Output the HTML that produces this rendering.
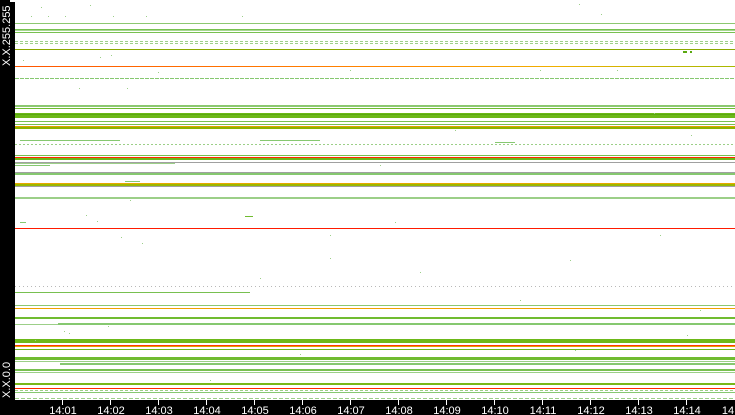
<!DOCTYPE html>
<html><head><style>
html,body{margin:0;padding:0;background:#fff;width:735px;height:415px;overflow:hidden}
svg{display:block}
text{font-family:"Liberation Sans",sans-serif;fill:#fff;font-size:11px}
</style></head><body>
<svg width="735" height="415" viewBox="0 0 735 415" xmlns="http://www.w3.org/2000/svg">
<defs>
<linearGradient id="og" x1="0" x2="1"><stop offset="0" stop-color="#ff5500"/><stop offset="0.55" stop-color="#ff8a00"/><stop offset="0.75" stop-color="#f0b000"/><stop offset="1" stop-color="#a8b800"/></linearGradient>
<linearGradient id="yg" x1="0" x2="1"><stop offset="0" stop-color="#e0a000"/><stop offset="1" stop-color="#c8a800"/></linearGradient>
</defs>
<rect x="0" y="0" width="735" height="415" fill="#fff"/>
<g shape-rendering="crispEdges">
<!-- top region -->
<rect x="15" y="23" width="720" height="1" fill="#8cc870"/>
<rect x="15" y="29" width="720" height="1" fill="#78c050" stroke-dasharray="3 2"/>
<rect x="15" y="30" width="720" height="1" fill="#a6d890"/>
<rect x="15" y="32" width="720" height="1" fill="#78c050"/>
<line x1="15" y1="41.5" x2="735" y2="41.5" stroke="#9ccf88" stroke-dasharray="3 2"/>
<line x1="15" y1="43.5" x2="735" y2="43.5" stroke="#9ccf88" stroke-dasharray="3 2"/>
<rect x="15" y="49" width="720" height="1" fill="#8ca800"/>
<rect x="15" y="66" width="720" height="1" fill="url(#og)"/>
<line x1="15" y1="78.5" x2="735" y2="78.5" stroke="#86c870" stroke-dasharray="4 1"/>
<rect x="15" y="105" width="720" height="2" fill="#8cc870"/>
<rect x="15" y="108" width="720" height="1" fill="#70bc30"/>
<rect x="15" y="113" width="720" height="5" fill="#6cb818"/>
<rect x="15" y="114" width="720" height="1" fill="#5aa810"/>
<rect x="15" y="121" width="720" height="1" fill="#78c050"/>
<rect x="15" y="124" width="720" height="1" fill="#78c050"/>
<rect x="15" y="126" width="720" height="3" fill="#8cb400"/>
<rect x="15" y="126" width="720" height="1" fill="#e0a000"/>
<!-- middle -->
<rect x="20" y="140" width="100" height="1" fill="#86c870"/>
<rect x="260" y="140" width="60" height="1" fill="#86c870"/>
<rect x="495" y="142" width="20" height="1" fill="#86c870"/>
<line x1="15" y1="144.5" x2="735" y2="144.5" stroke="#9ccf88" stroke-dasharray="2 2"/>
<rect x="15" y="155" width="720" height="1" fill="#78c050"/>
<rect x="15" y="157" width="720" height="1" fill="#ff2a00"/>
<rect x="15" y="158" width="720" height="2" fill="#6cb818"/>
<rect x="15" y="162" width="720" height="1" fill="#a0a0a0"/>
<rect x="15" y="163" width="160" height="1" fill="#9ccf88"/>
<rect x="15" y="165" width="35" height="1" fill="#86c870"/>
<rect x="15" y="172" width="720" height="1" fill="#a0a0a0"/>
<rect x="15" y="173" width="720" height="2" fill="#86c870"/>
<rect x="125" y="181" width="15" height="1" fill="#86c870"/>
<rect x="15" y="183" width="720" height="3" fill="#9cb800"/>
<rect x="15" y="183" width="720" height="1" fill="#e8a800"/>
<rect x="15" y="186" width="720" height="1" fill="#a0a0a0"/>
<rect x="15" y="197" width="720" height="2" fill="#9ccf88"/>
<rect x="15" y="228" width="720" height="1" fill="#ff1a00"/>
<rect x="20" y="222" width="6" height="1" fill="#86c870"/>
<rect x="245" y="216" width="8" height="1" fill="#70bc30"/>
<line x1="15" y1="286.5" x2="735" y2="286.5" stroke="#b8b8b8" stroke-dasharray="1 3"/>
<rect x="15" y="292" width="235" height="1" fill="#78c050"/>
<!-- lower -->
<rect x="15" y="305" width="720" height="1" fill="#8cc870"/>
<rect x="15" y="308" width="720" height="1" fill="#f0a000"/>
<rect x="15" y="317" width="720" height="2" fill="#70bc30"/>
<rect x="15" y="324" width="45" height="1" fill="#9ccf88"/>
<rect x="58" y="323" width="677" height="2" fill="#86c870"/>
<rect x="15" y="339" width="720" height="4" fill="#6cb818"/>
<rect x="15" y="345" width="720" height="1" fill="#ff3a00"/>
<rect x="15" y="346" width="720" height="1" fill="#e0a000"/>
<rect x="15" y="349" width="720" height="1" fill="#6cb818"/>
<rect x="15" y="357" width="720" height="3" fill="#70bc30"/>
<rect x="15" y="361" width="720" height="1" fill="#9ccf88"/>
<rect x="60" y="363" width="675" height="2" fill="#86c870"/>
<rect x="15" y="369" width="720" height="2" fill="#78c050"/>
<rect x="15" y="372" width="720" height="1" fill="#9ccf88"/>
<rect x="15" y="383" width="720" height="2" fill="#78b818"/>
<rect x="15" y="388" width="720" height="1" fill="#ff2a00"/>
<line x1="15" y1="390.5" x2="735" y2="390.5" stroke="#9ccf88" stroke-dasharray="3 2"/>
<rect x="15" y="392" width="720" height="1" fill="#86c870"/>
<line x1="15" y1="398.5" x2="735" y2="398.5" stroke="#9ccf88" stroke-dasharray="4 2"/>
<!-- scattered dots -->
<g fill="#9ccf88">
<rect x="41" y="7" width="1" height="1"/><rect x="31" y="16" width="1" height="1"/><rect x="48" y="16" width="1" height="1"/><rect x="65" y="16" width="1" height="1"/><rect x="113" y="16" width="1" height="1"/><rect x="90" y="5" width="1" height="1"/><rect x="146" y="16" width="1" height="1"/><rect x="242" y="16" width="1" height="1"/><rect x="579" y="4" width="1" height="1"/><rect x="601" y="14" width="1" height="1"/><rect x="100" y="57" width="1" height="1"/><rect x="111" y="55" width="1" height="1"/><rect x="23" y="60" width="1" height="1"/><rect x="79" y="88" width="1" height="1"/><rect x="127" y="88" width="1" height="1"/><rect x="158" y="72" width="1" height="1"/><rect x="350" y="70" width="1" height="1"/><rect x="540" y="70" width="1" height="1"/><rect x="617" y="70" width="1" height="1"/><rect x="654" y="113" width="1" height="1"/><rect x="691" y="135" width="1" height="1"/><rect x="130" y="200" width="1" height="1"/><rect x="86" y="215" width="1" height="1"/><rect x="97" y="221" width="1" height="1"/><rect x="395" y="222" width="1" height="1"/><rect x="660" y="235" width="1" height="1"/><rect x="142" y="243" width="1" height="1"/><rect x="121" y="237" width="1" height="1"/><rect x="330" y="235" width="1" height="1"/><rect x="570" y="260" width="1" height="1"/><rect x="455" y="130" width="1" height="1"/><rect x="380" y="165" width="1" height="1"/><rect x="64" y="331" width="1" height="1"/><rect x="69" y="333" width="1" height="1"/><rect x="108" y="326" width="1" height="1"/><rect x="35" y="340" width="1" height="1"/><rect x="687" y="335" width="1" height="1"/><rect x="575" y="350" width="1" height="1"/><rect x="210" y="380" width="1" height="1"/><rect x="100" y="390" width="1" height="1"/><rect x="300" y="354" width="1" height="1"/><rect x="520" y="300" width="1" height="1"/><rect x="700" y="310" width="1" height="1"/><rect x="330" y="258" width="1" height="1"/><rect x="260" y="278" width="1" height="1"/><rect x="420" y="272" width="1" height="1"/></g>
<rect x="683" y="51" width="4" height="2" fill="#5aa810"/><rect x="690" y="51" width="2" height="2" fill="#5aa810"/>
<!-- axes -->
<rect x="0" y="0" width="15" height="415" fill="#000"/>
<rect x="10" y="0" width="5" height="2" fill="#fff"/>
<rect x="0" y="400" width="735" height="15" fill="#000"/>
<rect x="15" y="399" width="720" height="1" fill="#fff"/>
<g fill="#fff">
<rect x="62" y="400" width="1" height="5"/><rect x="110" y="400" width="1" height="5"/><rect x="158" y="400" width="1" height="5"/><rect x="206" y="400" width="1" height="5"/><rect x="254" y="400" width="1" height="5"/><rect x="302" y="400" width="1" height="5"/><rect x="350" y="400" width="1" height="5"/><rect x="398" y="400" width="1" height="5"/><rect x="446" y="400" width="1" height="5"/><rect x="494" y="400" width="1" height="5"/><rect x="542" y="400" width="1" height="5"/><rect x="590" y="400" width="1" height="5"/><rect x="638" y="400" width="1" height="5"/><rect x="686" y="400" width="1" height="5"/>
</g>
</g>
<g text-anchor="middle">
<text x="63" y="414">14:01</text><text x="111" y="414">14:02</text><text x="159" y="414">14:03</text><text x="207" y="414">14:04</text><text x="255" y="414">14:05</text><text x="303" y="414">14:06</text><text x="351" y="414">14:07</text><text x="399" y="414">14:08</text><text x="447" y="414">14:09</text><text x="495" y="414">14:10</text><text x="543" y="414">14:11</text><text x="591" y="414">14:12</text><text x="639" y="414">14:13</text><text x="687" y="414">14:14</text><text x="728" y="414">14</text>
</g>
<text transform="translate(10,66) rotate(-90)" x="0" y="0">X.X.255.255</text>
<text transform="translate(10,398) rotate(-90)" x="0" y="0">X.X.0.0</text>
</svg>
</body></html>
